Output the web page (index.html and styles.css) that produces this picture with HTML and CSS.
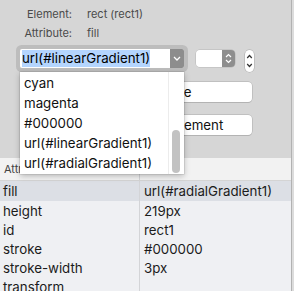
FILE: index.html
```html
<!DOCTYPE html>
<html lang="en">
<head>
  <meta charset="UTF-8">
  <title>Attribute inspector</title>
  <link rel="stylesheet" href="styles.css">
</head>
<body>
  <div class="window">
    <div class="inspector">
      <div class="info">
        <span class="lbl">Element:</span><span class="val">rect (rect1)</span>
        <span class="lbl">Attribute:</span><span class="val">fill</span>
      </div>

      <div class="controls">
        <div class="combo">
          <span class="combo-text"><span class="sel">url(#linearGradient1)</span></span>
          <span class="combo-btn">
            <svg width="8" height="5" viewBox="0 0 8 5"><path d="M1 1 L4 4 L7 1" fill="none" stroke="#fff" stroke-width="1.3"/></svg>
          </span>
        </div>
        <div class="popup">
          <span class="popup-field"></span>
          <span class="popup-btn">
            <svg width="7" height="11" viewBox="0 0 7 11"><path d="M1 4 L3.5 1.5 L6 4 M1 7 L3.5 9.5 L6 7" fill="none" stroke="#fff" stroke-width="1.2"/></svg>
          </span>
        </div>
        <div class="stepper">
          <svg width="7" height="18" viewBox="0 0 7 18"><path d="M1.2 6 L3.5 3.5 L5.8 6 M1.2 12 L3.5 14.5 L5.8 12" fill="none" stroke="#333" stroke-width="1.2"/></svg>
        </div>
      </div>

      <div class="actions">
        <button>Save</button>
        <button>Delete Element</button>
      </div>
    </div>

    <div class="table">
      <div class="row head"><span class="c1">Attribute</span><span class="c2">Value</span></div>
      <div class="row selected"><span class="c1">fill</span><span class="c2">url(#radialGradient1)</span></div>
      <div class="row"><span class="c1">height</span><span class="c2">219px</span></div>
      <div class="row"><span class="c1">id</span><span class="c2">rect1</span></div>
      <div class="row"><span class="c1">stroke</span><span class="c2">#000000</span></div>
      <div class="row"><span class="c1">stroke-width</span><span class="c2">3px</span></div>
      <div class="row"><span class="c1">transform</span><span class="c2"></span></div>
    </div>

    <div class="dropdown">
      <ul class="options">
        <li>cyan</li>
        <li>magenta</li>
        <li>#000000</li>
        <li>url(#linearGradient1)</li>
        <li>url(#radialGradient1)</li>
      </ul>
      <div class="scroll"><div class="thumb"></div></div>
    </div>
  </div>
</body>
</html>
```

FILE: styles.css
```css
body {
  margin: 0;
  background: #dcdcdc;
  font-family: Inter, "Liberation Sans", sans-serif;
  color: #1b1b1b;
}

.window {
  position: relative;
  width: 291px;
  height: 291px;
  border-right: 1px solid #b2b2b2;
  display: flex;
  flex-direction: column;
  overflow: hidden;
}

.inspector {
  flex-shrink: 0;
  height: 158px;
  background: #d6d6d6;
  padding-top: 5px;
  box-sizing: border-box;
}

.info {
  display: grid;
  grid-template-columns: 72px auto;
  column-gap: 15px;
  font-size: 11px;
  line-height: 19px;
  color: #4a4a4a;
}

.lbl {
  text-align: right;
}

.controls {
  display: flex;
  align-items: flex-start;
  margin: 6px 0 0 20px;
}

.combo {
  display: flex;
  width: 164px;
  height: 19px;
  background: #fff;
  border-radius: 2px;
  box-shadow: 0 0 0 4px #bdbdbd;
}

.combo-text {
  flex: 1;
  padding: 1px 0 0 2px;
  font-size: 13.3px;
  line-height: 17px;
  color: #000;
}

.sel {
  background: #b4d5fe;
  display: inline-block;
}

.combo-btn {
  width: 14px;
  background: #8d8d8d;
  border-radius: 0 2px 2px 0;
  display: flex;
  align-items: center;
  justify-content: center;
}

.popup {
  display: flex;
  width: 39px;
  height: 17px;
  margin: 1px 0 0 12px;
  border-radius: 4px;
  overflow: hidden;
  box-shadow: 0 0 0 0.5px #b5b5b5;
}

.popup-field {
  flex: 1;
  background: #fff;
}

.popup-btn {
  width: 13px;
  background: #8e8e8e;
  display: flex;
  align-items: center;
  justify-content: center;
}

.stepper {
  width: 9px;
  height: 22px;
  margin: 1px 0 0 10px;
  background: #fff;
  border-radius: 5px;
  box-shadow: 0 0 0 0.5px #a8a8a8;
  display: flex;
  align-items: center;
  justify-content: center;
}

.actions {
  display: flex;
  flex-direction: column;
  gap: 13px;
  width: 152px;
  margin: 10px 0 0 100px;
}

.actions button {
  height: 20px;
  padding: 0;
  background: #fff;
  border: none;
  border-radius: 4px;
  box-shadow: 0 0 0 0.5px #a9a9a9, 0 1px 0 #bcbcbc;
  font-family: inherit;
  font-size: 13.3px;
  color: #111;
}

.table {
  flex: 1;
  background: #eff0f3;
  font-size: 13.3px;
}

.row {
  display: flex;
  height: 19px;
  line-height: 20px;
}

.row .c1 {
  width: 136px;
  padding-left: 3px;
  border-right: 1px solid #d3d4d7;
}

.row .c2 {
  padding-left: 4px;
}

.row.head {
  height: 22px;
  line-height: 22px;
  background: #f2f2f2;
  border-bottom: 1px solid #d4d4d4;
  font-size: 11px;
  color: #444;
}

.row.head .c1 {
  padding-left: 4px;
  width: 135px;
}

.row.selected {
  height: 20px;
  background: #dcdfe5;
}

.dropdown {
  position: absolute;
  left: 20px;
  top: 72px;
  width: 164px;
  height: 102px;
  background: #fff;
  display: flex;
  box-shadow: 0 2px 6px rgba(0,0,0,0.25), 0 0 0 0.5px rgba(0,0,0,0.15);
}

.options {
  flex: 1;
  list-style: none;
  margin: 0;
  padding: 1px 0 0 4px;
  font-size: 13.3px;
  line-height: 20px;
  color: #111;
}

.scroll {
  width: 15px;
  border-left: 1px solid #ececec;
  position: relative;
}

.thumb {
  position: absolute;
  left: 3px;
  top: 58px;
  width: 8px;
  height: 43px;
  border-radius: 4px;
  background: #c2c2c2;
}
```
